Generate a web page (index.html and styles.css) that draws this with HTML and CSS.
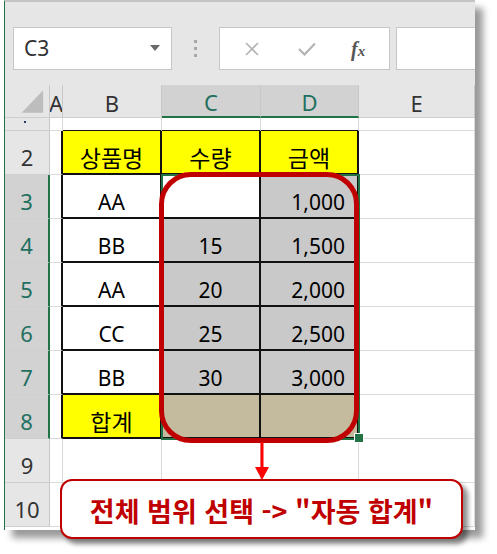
FILE: index.html
```html
<!DOCTYPE html>
<html lang="ko">
<head>
<meta charset="utf-8">
<link rel="stylesheet" href="styles.css">
</head>
<body>
<div class="stage">
  <div class="window">
    <div class="fbar">
      <div class="namebox"><span class="ref">C3</span><span class="caret"></span></div>
      <div class="dots"><i></i><i></i><i></i></div>
      <div class="fbox">
        <svg class="ico-x" width="14" height="14" viewBox="0 0 14 14"><path d="M1 1 L13 13 M13 1 L1 13" stroke="#b3b3b3" stroke-width="1.6" fill="none"/></svg>
        <svg class="ico-ok" width="18" height="14" viewBox="0 0 18 14"><path d="M1 7 L6.5 12.5 L17 1.5" stroke="#b3b3b3" stroke-width="2.2" fill="none"/></svg>
        <span class="fx">f<span class="fxx">x</span></span>
      </div>
      <div class="fcontent"></div>
    </div>
    <div class="sheet">
      <!-- header row -->
      <div class="c corner"><svg width="45" height="33" viewBox="0 0 45 33"><polygon points="39,5 39,28 17,28" fill="#bdbdbd"/></svg></div>
      <div class="c ch">A</div>
      <div class="c ch">B</div>
      <div class="c ch sel">C</div>
      <div class="c ch sel">D</div>
      <div class="c ch">E</div>
      <!-- row 1 -->
      <div class="c rh r1"><span class="dot"></span></div>
      <div class="c"></div>
      <div class="c tt"></div>
      <div class="c tt"></div>
      <div class="c tt"></div>
      <div class="c"></div>
      <!-- row 2 -->
      <div class="c rh">2</div>
      <div class="c tl"></div>
      <div class="c t y ko">상품명</div>
      <div class="c t y ko">수량</div>
      <div class="c t y ko">금액</div>
      <div class="c"></div>
      <!-- row 3 -->
      <div class="c rh sel">3</div>
      <div class="c tl"></div>
      <div class="c t ctr">AA</div>
      <div class="c t"></div>
      <div class="c t g num">1,000</div>
      <div class="c"></div>
      <!-- row 4 -->
      <div class="c rh sel">4</div>
      <div class="c tl"></div>
      <div class="c t ctr">BB</div>
      <div class="c t g ctr">15</div>
      <div class="c t g num">1,500</div>
      <div class="c"></div>
      <!-- row 5 -->
      <div class="c rh sel">5</div>
      <div class="c tl"></div>
      <div class="c t ctr">AA</div>
      <div class="c t g ctr">20</div>
      <div class="c t g num">2,000</div>
      <div class="c"></div>
      <!-- row 6 -->
      <div class="c rh sel">6</div>
      <div class="c tl"></div>
      <div class="c t ctr">CC</div>
      <div class="c t g ctr">25</div>
      <div class="c t g num">2,500</div>
      <div class="c"></div>
      <!-- row 7 -->
      <div class="c rh sel">7</div>
      <div class="c tl"></div>
      <div class="c t ctr">BB</div>
      <div class="c t g ctr">30</div>
      <div class="c t g num">3,000</div>
      <div class="c"></div>
      <!-- row 8 -->
      <div class="c rh sel">8</div>
      <div class="c tl"></div>
      <div class="c t y ko">합계</div>
      <div class="c t tan"></div>
      <div class="c t tan"></div>
      <div class="c"></div>
      <!-- row 9 -->
      <div class="c rh">9</div>
      <div class="c"></div>
      <div class="c"></div>
      <div class="c"></div>
      <div class="c"></div>
      <div class="c"></div>
      <!-- row 10 -->
      <div class="c rh">10</div>
      <div class="c"></div>
      <div class="c"></div>
      <div class="c"></div>
      <div class="c"></div>
      <div class="c"></div>
    </div>
  </div>

  <div class="selbox"></div>
  <div class="handle"></div>
  <div class="redbox"></div>
  <svg class="arrow" width="16" height="40" viewBox="0 0 16 40"><line x1="8" y1="0" x2="8" y2="28" stroke="#ff0000" stroke-width="3"/><polygon points="1,25 15,25 8,38" fill="#ff0000"/></svg>
  <div class="callout">전체 범위 선택 -&gt; "자동 합계"</div>
</div>
</body>
</html>
```

FILE: styles.css
```css
html, body {
  margin: 0;
  padding: 0;
  background: #ffffff;
}
body {
  font-family: "Noto Sans", "Noto Sans CJK KR", sans-serif;
  color: #000;
}
.stage {
  position: relative;
  width: 497px;
  height: 554px;
  overflow: hidden;
}
.window {
  margin-left: 4px;
  width: 471px;
  height: 530px;
  box-sizing: border-box;
  border-left: 1px solid #217346;
  border-top: 2px solid #c4c4c4;
  background: #fff;
  overflow: hidden;
  box-shadow: 8px 8px 7px rgba(0, 0, 0, 0.4);
}
.fbar {
  height: 83px;
  box-sizing: border-box;
  background: #e6e6e6;
  display: flex;
  align-items: flex-start;
  padding-top: 25px;
  padding-left: 8px;
}
.namebox {
  width: 159px;
  height: 43px;
  box-sizing: border-box;
  background: #fff;
  border: 1px solid #c6c6c6;
  display: flex;
  align-items: center;
  justify-content: space-between;
  padding: 0 11px 0 10px;
}
.ref {
  font-size: 21px;
  color: #333;
  line-height: 1;
}
.caret {
  width: 0;
  height: 0;
  border-left: 5px solid transparent;
  border-right: 5px solid transparent;
  border-top: 6px solid #6a6a6a;
  margin-top: -2px;
}
.dots {
  width: 47px;
  height: 43px;
  display: flex;
  flex-direction: column;
  align-items: center;
  justify-content: center;
  gap: 4px;
}
.dots i {
  display: block;
  width: 3px;
  height: 3px;
  background: #a8a8a8;
}
.fbox {
  width: 171px;
  height: 43px;
  box-sizing: border-box;
  background: #fff;
  border: 1px solid #c6c6c6;
  display: flex;
  align-items: center;
  padding-left: 25px;
}
.ico-ok {
  margin-left: 39px;
}
.fx {
  margin-left: 35px;
  font-family: "Liberation Serif", serif;
  font-style: italic;
  font-weight: bold;
  font-size: 20px;
  color: #555;
  line-height: 1;
}
.fxx {
  font-size: 15px;
}
.fcontent {
  margin-left: 6px;
  flex: 1;
  height: 43px;
  box-sizing: border-box;
  background: #fff;
  border: 1px solid #c6c6c6;
  border-right: none;
}
.sheet {
  display: grid;
  grid-template-columns: 45px 13px 99px 99px 98px 1fr;
  grid-template-rows: 33px 13px repeat(9, 44px);
}
.c {
  box-sizing: border-box;
  border-right: 1px solid #dadada;
  border-bottom: 1px solid #dadada;
  display: flex;
  align-items: center;
  justify-content: center;
  padding-top: 12px;
  font-size: 21px;
  line-height: 1;
  overflow: hidden;
  white-space: nowrap;
}
.corner {
  background: #e6e6e6;
  padding: 0;
  border-right: 1px solid #c8c8c8;
  border-bottom: 1px solid #cfcfcf;
  align-items: stretch;
}
.ch {
  background: #e6e6e6;
  border-right: 1px solid #c8c8c8;
  border-bottom: 1px solid #cfcfcf;
  padding-top: 3px;
  font-size: 22px;
  color: #333;
}
.ch.sel {
  background: #d2d2d2;
  border-bottom: 2px solid #217346;
  color: #227060;
}
.rh {
  background: #e6e6e6;
  border-right: 1px solid #c8c8c8;
  border-bottom: 1px solid #cfcfcf;
  font-size: 22px;
  padding-top: 8px;
  color: #333;
}
.rh.sel {
  background: #d2d2d2;
  border-right: 2px solid #217346;
  color: #227060;
}
.r1 {
  padding: 0;
  align-items: flex-start;
}
.dot {
  display: block;
  width: 2px;
  height: 2px;
  margin-top: 3px;
  margin-right: 4px;
  background: #2b3a67;
}
.t {
  border-right: 2px solid #111;
  border-bottom: 2px solid #111;
}
.tl {
  border-right: 2px solid #111;
}
.tt {
  border-bottom: 2px solid #111;
}
.y {
  background: #ffff00;
}
.g {
  background: #c9c9c9;
}
.tan {
  background: #c4bb9e;
}
.ko {
  font-family: "Noto Sans CJK KR", sans-serif;
  font-size: 23px;
  padding-top: 10px;
}
.num {
  justify-content: flex-end;
  padding-right: 12px;
}
.selbox {
  position: absolute;
  left: 161px;
  top: 174px;
  width: 199px;
  height: 266px;
  box-sizing: border-box;
  border: 2px solid #217346;
}
.handle {
  position: absolute;
  left: 354px;
  top: 433px;
  width: 10px;
  height: 10px;
  box-sizing: border-box;
  background: #217346;
  border: 1px solid #fff;
}
.redbox {
  position: absolute;
  left: 159px;
  top: 172px;
  width: 200px;
  height: 271px;
  box-sizing: border-box;
  border: 5px solid #c00000;
  border-radius: 32px;
}
.arrow {
  position: absolute;
  left: 254px;
  top: 442px;
}
.callout {
  position: absolute;
  left: 60px;
  top: 479px;
  width: 403px;
  height: 60px;
  box-sizing: border-box;
  border: 2px solid #c00000;
  border-radius: 12px;
  background: #fff;
  box-shadow: 5px 5px 5px rgba(0, 0, 0, 0.45);
  display: flex;
  align-items: center;
  justify-content: center;
  font-family: "Noto Sans CJK KR", sans-serif;
  font-weight: bold;
  font-size: 27px;
  color: #c00000;
  padding-top: 2px;
}
```
